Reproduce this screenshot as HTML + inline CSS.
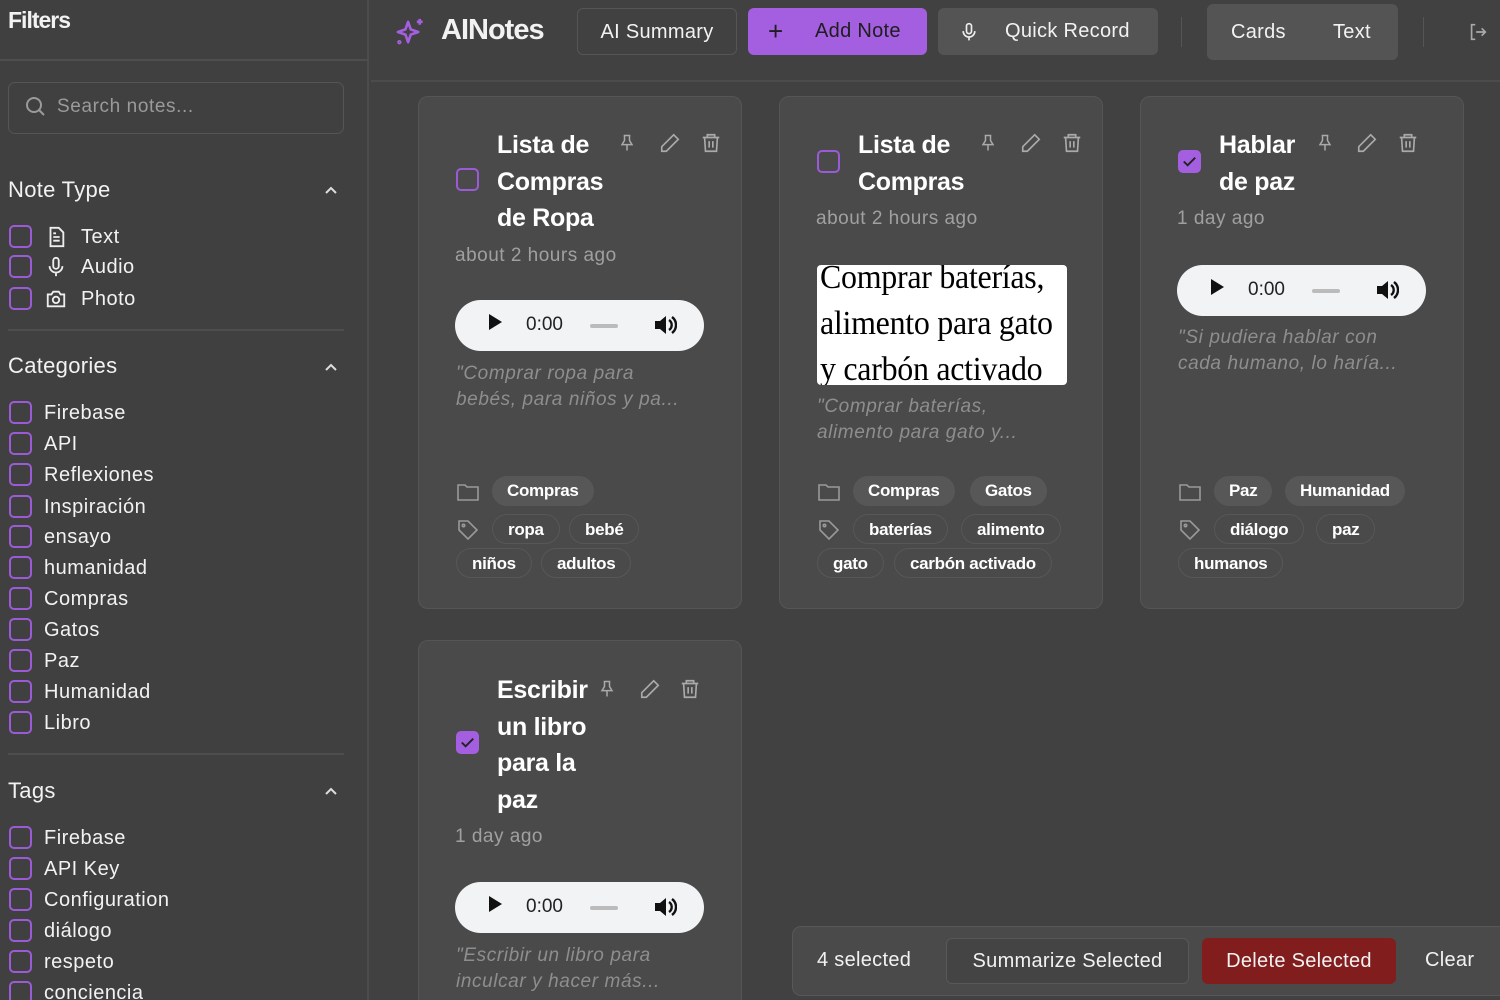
<!DOCTYPE html>
<html><head><meta charset="utf-8"><style>
*{box-sizing:border-box;margin:0;padding:0}
html,body{width:1500px;height:1000px;overflow:hidden}
body{background:#414141;font-family:"Liberation Sans","DejaVu Sans",sans-serif;color:#f2f2f2;position:relative}
.abs{position:absolute}
#side{left:0;top:0;width:369px;height:1000px;background:#404040;border-right:2px solid #4c4c4c}
.cb{position:absolute;width:23px;height:23px;border:2px solid #9b5bd6;border-radius:5px}
.cb.on{background:#a45ee0;border-color:#a45ee0}
.item{position:absolute;left:0;font-size:20px;height:24px;line-height:24px;letter-spacing:0.5px}
.item .cb{left:9px;top:0}
.item span{position:absolute;white-space:nowrap}
.hd{position:absolute;left:8px;font-size:22px;letter-spacing:0.3px}
.chev{position:absolute;left:323px;width:16px;height:10px}
.hr{position:absolute;left:8px;width:336px;height:2px;background:#4e4e4e}
.card{position:absolute;width:324px;background:#4a4a4a;border:1px solid #555;border-radius:10px}
.title{position:absolute;left:78px;font-weight:bold;font-size:25px;line-height:36.5px;letter-spacing:-0.3px;color:#fff}
.date{position:absolute;left:36px;font-size:19px;color:#a0a0a0;letter-spacing:0.5px}
.audio{position:absolute;left:36px;width:249px;height:51px;background:#f1f3f4;border-radius:26px;color:#222;font-size:19px}
.desc{position:absolute;left:37px;font-size:19px;font-style:italic;color:#8e8e8e;line-height:26px;width:228px;letter-spacing:0.6px}
.pill{position:absolute;height:30px;line-height:29px;border-radius:15px;font-size:17px;font-weight:bold;padding:0 15px;color:#fff;letter-spacing:-0.3px}
.cat{background:#575757}
.tag{border:1px solid #575757}
.ic{position:absolute}
.btn{position:absolute;top:8px;height:47px;border-radius:6px;font-size:20px;line-height:47px;letter-spacing:0.3px}
</style></head><body>
<div id="side" class="abs">
 <div class="abs" style="left:8px;top:7px;font-size:23px;font-weight:bold;letter-spacing:-1px">Filters</div>
 <div class="abs" style="left:0;top:59px;width:369px;height:2px;background:#4e4e4e"></div>
 <div class="abs" style="left:8px;top:82px;width:336px;height:52px;border:1px solid #555;border-radius:7px"></div>
 <svg class="ic" style="left:24px;top:95px" width="24" height="24" viewBox="0 0 24 24" fill="none" stroke="#9a9a9a" stroke-width="2"><circle cx="10" cy="10" r="7"/><path d="M15 15l5 5"/></svg>
 <div class="abs" style="left:57px;top:96px;font-size:19px;color:#9a9a9a;letter-spacing:0.6px">Search notes...</div>
 <div class="hd" style="top:177px">Note Type</div>
 <svg class="chev" style="top:185px" viewBox="0 0 16 10" fill="none" stroke="#ddd" stroke-width="2"><path d="M3 8l5-5 5 5"/></svg>
 <div class="item" style="top:225px"><div class="cb"></div><svg class="ic" style="left:45px;top:1px" width="22" height="22" viewBox="0 0 24 24" fill="none" stroke="#eee" stroke-width="2"><path d="M6 2h9l5 5v15H6z"/><path d="M9 12h7M9 16h7M9 8h3"/></svg><span style="left:81px">Text</span></div>
 <div class="item" style="top:255px"><div class="cb"></div><svg class="ic" style="left:45px;top:1px" width="22" height="22" viewBox="0 0 24 24" fill="none" stroke="#eee" stroke-width="2"><rect x="9" y="2" width="6" height="12" rx="3"/><path d="M5 11a7 7 0 0014 0M12 18v4"/></svg><span style="left:81px">Audio</span></div>
 <div class="item" style="top:287px"><div class="cb"></div><svg class="ic" style="left:45px;top:1px" width="22" height="22" viewBox="0 0 24 24" fill="none" stroke="#eee" stroke-width="2"><path d="M3 7h4l2-3h6l2 3h4v13H3z"/><circle cx="12" cy="13" r="3.5"/></svg><span style="left:81px">Photo</span></div>
 <div class="hr" style="top:329px"></div>
 <div class="hd" style="top:353px">Categories</div>
 <svg class="chev" style="top:362px" viewBox="0 0 16 10" fill="none" stroke="#ddd" stroke-width="2"><path d="M3 8l5-5 5 5"/></svg>
 <div class="item" style="top:401px"><div class="cb"></div><span style="left:44px">Firebase</span></div>
 <div class="item" style="top:432px"><div class="cb"></div><span style="left:44px">API</span></div>
 <div class="item" style="top:463px"><div class="cb"></div><span style="left:44px">Reflexiones</span></div>
 <div class="item" style="top:495px"><div class="cb"></div><span style="left:44px">Inspiración</span></div>
 <div class="item" style="top:525px"><div class="cb"></div><span style="left:44px">ensayo</span></div>
 <div class="item" style="top:556px"><div class="cb"></div><span style="left:44px">humanidad</span></div>
 <div class="item" style="top:587px"><div class="cb"></div><span style="left:44px">Compras</span></div>
 <div class="item" style="top:618px"><div class="cb"></div><span style="left:44px">Gatos</span></div>
 <div class="item" style="top:649px"><div class="cb"></div><span style="left:44px">Paz</span></div>
 <div class="item" style="top:680px"><div class="cb"></div><span style="left:44px">Humanidad</span></div>
 <div class="item" style="top:711px"><div class="cb"></div><span style="left:44px">Libro</span></div>
 <div class="hr" style="top:753px"></div>
 <div class="hd" style="top:778px">Tags</div>
 <svg class="chev" style="top:786px" viewBox="0 0 16 10" fill="none" stroke="#ddd" stroke-width="2"><path d="M3 8l5-5 5 5"/></svg>
 <div class="item" style="top:826px"><div class="cb"></div><span style="left:44px">Firebase</span></div>
 <div class="item" style="top:857px"><div class="cb"></div><span style="left:44px">API Key</span></div>
 <div class="item" style="top:888px"><div class="cb"></div><span style="left:44px">Configuration</span></div>
 <div class="item" style="top:919px"><div class="cb"></div><span style="left:44px">diálogo</span></div>
 <div class="item" style="top:950px"><div class="cb"></div><span style="left:44px">respeto</span></div>
 <div class="item" style="top:981px"><div class="cb"></div><span style="left:44px">conciencia</span></div>
</div>

<div class="abs" style="left:371px;top:80px;width:1129px;height:2px;background:#4c4c4c"></div>
<svg class="ic" style="left:393px;top:16px" width="36" height="32" viewBox="0 0 24 22" fill="none" stroke="#a45ee0" stroke-width="1.8" stroke-linejoin="round"><path d="M10 4l1.8 5.2L17 11l-5.2 1.8L10 18l-1.8-5.2L3 11l5.2-1.8z"/><path d="M18 2v4M16 4h4"/><circle cx="4" cy="18" r="0.6"/></svg>
<div class="abs" style="left:441px;top:14px;font-size:29px;font-weight:bold;letter-spacing:-1px">AINotes</div>
<div class="btn" style="left:577px;width:160px;border:1px solid #555;text-align:center">AI Summary</div>
<div class="btn" style="left:748px;width:179px;background:#a45ee0;color:#1e1e1e"><span style="position:absolute;left:20px;font-size:26px">+</span><span style="position:absolute;left:67px">Add Note</span></div>
<div class="btn" style="left:938px;width:220px;background:#545454"><svg class="ic" style="left:21px;top:13px" width="20" height="22" viewBox="0 0 24 24" fill="none" stroke="#eee" stroke-width="2"><rect x="9" y="2" width="6" height="12" rx="3"/><path d="M5 11a7 7 0 0014 0M12 18v4"/></svg><span style="position:absolute;left:67px">Quick Record</span></div>
<div class="abs" style="left:1181px;top:17px;width:1px;height:30px;background:#555"></div>
<div class="abs" style="left:1207px;top:4px;width:191px;height:56px;background:#545454;border-radius:6px;font-size:20px;line-height:56px;letter-spacing:0.3px"><span style="position:absolute;left:24px">Cards</span><span style="position:absolute;left:126px">Text</span></div>
<div class="abs" style="left:1423px;top:17px;width:1px;height:30px;background:#555"></div>
<svg class="ic" style="left:1467px;top:21px" width="22" height="22" viewBox="0 0 24 24" fill="none" stroke="#aaa" stroke-width="1.8"><path d="M9 4H5v16h4M10 12h10M16 8l4 4-4 4"/></svg>

<div class="card" style="left:418px;top:96px;height:513px">
 <div class="cb" style="left:37px;top:71px"></div>
 <div class="title" style="top:30px">Lista de<br>Compras<br>de Ropa</div>
 <svg class="ic" style="left:198px;top:35px" width="20" height="22" viewBox="0 0 24 24" fill="none" stroke="#aaa" stroke-width="1.8"><path d="M8 3h8M9 3v6l-3 5h12l-3-5V3M12 14v7"/></svg>
 <svg class="ic" style="left:240px;top:35px" width="22" height="22" viewBox="0 0 24 24" fill="none" stroke="#aaa" stroke-width="1.8"><path d="M16 3l5 5L8 21H3v-5z"/></svg>
 <svg class="ic" style="left:281px;top:35px" width="22" height="22" viewBox="0 0 24 24" fill="none" stroke="#aaa" stroke-width="1.8"><path d="M3 6h18M8 6V3h8v3M5 6l1 15h12l1-15M10 10v7M14 10v7"/></svg>
 <div class="date" style="top:148px">about 2 hours ago</div>
 <div class="audio" style="top:203px"><span style="position:absolute;left:34px;top:14px;border-left:13px solid #111;border-top:8px solid transparent;border-bottom:8px solid transparent"></span><span style="position:absolute;left:71px;top:14px">0:00</span><span style="position:absolute;left:135px;top:24px;width:28px;height:4px;background:#bbb;border-radius:2px"></span><svg class="ic" style="left:198px;top:14px" width="24" height="22" viewBox="0 0 24 22"><path d="M2 7h5l6-5v18l-6-5H2z" fill="#111"/><path d="M16 6a6 6 0 010 10M19 3a10 10 0 010 16" stroke="#111" stroke-width="2.4" fill="none"/></svg></div>
 <div class="desc" style="top:264px">"Comprar ropa para bebés, para niños y pa...</div>
 <svg class="ic" style="left:37px;top:385px" width="24" height="20" viewBox="0 0 24 20" fill="none" stroke="#999" stroke-width="1.6"><path d="M2 3h7l2 2h11v13H2z"/></svg>
 <div class="pill cat" style="left:73px;top:379px">Compras</div>
 <svg class="ic" style="left:37px;top:421px" width="24" height="24" viewBox="0 0 24 24" fill="none" stroke="#999" stroke-width="1.6"><path d="M3 3h9l9 9-9 9-9-9z"/><circle cx="7.5" cy="7.5" r="1.2"/></svg>
 <div class="pill tag" style="left:73px;top:417px">ropa</div>
 <div class="pill tag" style="left:150px;top:417px">bebé</div>
 <div class="pill tag" style="left:37px;top:451px">niños</div>
 <div class="pill tag" style="left:122px;top:451px">adultos</div>
</div>

<div class="card" style="left:779px;top:96px;height:513px">
 <div class="cb" style="left:37px;top:53px"></div>
 <div class="title" style="top:30px">Lista de<br>Compras</div>
 <svg class="ic" style="left:198px;top:35px" width="20" height="22" viewBox="0 0 24 24" fill="none" stroke="#aaa" stroke-width="1.8"><path d="M8 3h8M9 3v6l-3 5h12l-3-5V3M12 14v7"/></svg>
 <svg class="ic" style="left:240px;top:35px" width="22" height="22" viewBox="0 0 24 24" fill="none" stroke="#aaa" stroke-width="1.8"><path d="M16 3l5 5L8 21H3v-5z"/></svg>
 <svg class="ic" style="left:281px;top:35px" width="22" height="22" viewBox="0 0 24 24" fill="none" stroke="#aaa" stroke-width="1.8"><path d="M3 6h18M8 6V3h8v3M5 6l1 15h12l1-15M10 10v7M14 10v7"/></svg>
 <div class="date" style="top:111px">about 2 hours ago</div>
 <div class="abs" style="left:37px;top:168px;width:250px;height:120px;background:#fff;border-radius:4px;overflow:hidden;color:#000;font-family:'Liberation Serif',serif;font-size:34px;line-height:46px;padding-left:3px;white-space:nowrap;letter-spacing:-0.3px"><div style="margin-top:-10px;transform:scaleX(0.94);transform-origin:left">Comprar baterías,<br>alimento para gato<br>y carbón activado</div></div>
 <div class="desc" style="top:297px">"Comprar baterías, alimento para gato y...</div>
 <svg class="ic" style="left:37px;top:385px" width="24" height="20" viewBox="0 0 24 20" fill="none" stroke="#999" stroke-width="1.6"><path d="M2 3h7l2 2h11v13H2z"/></svg>
 <div class="pill cat" style="left:73px;top:379px">Compras</div>
 <div class="pill cat" style="left:190px;top:379px">Gatos</div>
 <svg class="ic" style="left:37px;top:421px" width="24" height="24" viewBox="0 0 24 24" fill="none" stroke="#999" stroke-width="1.6"><path d="M3 3h9l9 9-9 9-9-9z"/><circle cx="7.5" cy="7.5" r="1.2"/></svg>
 <div class="pill tag" style="left:73px;top:417px">baterías</div>
 <div class="pill tag" style="left:181px;top:417px">alimento</div>
 <div class="pill tag" style="left:37px;top:451px">gato</div>
 <div class="pill tag" style="left:114px;top:451px">carbón activado</div>
</div>

<div class="card" style="left:1140px;top:96px;height:513px">
 <div class="cb on" style="left:37px;top:53px"><svg width="19" height="19" viewBox="0 0 20 20" fill="none" stroke="#222" stroke-width="2"><path d="M4 10l4 4 8-8"/></svg></div>
 <div class="title" style="top:30px">Hablar<br>de paz</div>
 <svg class="ic" style="left:174px;top:35px" width="20" height="22" viewBox="0 0 24 24" fill="none" stroke="#aaa" stroke-width="1.8"><path d="M8 3h8M9 3v6l-3 5h12l-3-5V3M12 14v7"/></svg>
 <svg class="ic" style="left:215px;top:35px" width="22" height="22" viewBox="0 0 24 24" fill="none" stroke="#aaa" stroke-width="1.8"><path d="M16 3l5 5L8 21H3v-5z"/></svg>
 <svg class="ic" style="left:256px;top:35px" width="22" height="22" viewBox="0 0 24 24" fill="none" stroke="#aaa" stroke-width="1.8"><path d="M3 6h18M8 6V3h8v3M5 6l1 15h12l1-15M10 10v7M14 10v7"/></svg>
 <div class="date" style="top:111px">1 day ago</div>
 <div class="audio" style="top:168px"><span style="position:absolute;left:34px;top:14px;border-left:13px solid #111;border-top:8px solid transparent;border-bottom:8px solid transparent"></span><span style="position:absolute;left:71px;top:14px">0:00</span><span style="position:absolute;left:135px;top:24px;width:28px;height:4px;background:#bbb;border-radius:2px"></span><svg class="ic" style="left:198px;top:14px" width="24" height="22" viewBox="0 0 24 22"><path d="M2 7h5l6-5v18l-6-5H2z" fill="#111"/><path d="M16 6a6 6 0 010 10M19 3a10 10 0 010 16" stroke="#111" stroke-width="2.4" fill="none"/></svg></div>
 <div class="desc" style="top:228px">"Si pudiera hablar con cada humano, lo haría...</div>
 <svg class="ic" style="left:37px;top:385px" width="24" height="20" viewBox="0 0 24 20" fill="none" stroke="#999" stroke-width="1.6"><path d="M2 3h7l2 2h11v13H2z"/></svg>
 <div class="pill cat" style="left:73px;top:379px">Paz</div>
 <div class="pill cat" style="left:144px;top:379px">Humanidad</div>
 <svg class="ic" style="left:37px;top:421px" width="24" height="24" viewBox="0 0 24 24" fill="none" stroke="#999" stroke-width="1.6"><path d="M3 3h9l9 9-9 9-9-9z"/><circle cx="7.5" cy="7.5" r="1.2"/></svg>
 <div class="pill tag" style="left:73px;top:417px">diálogo</div>
 <div class="pill tag" style="left:175px;top:417px">paz</div>
 <div class="pill tag" style="left:37px;top:451px">humanos</div>
</div>

<div class="card" style="left:418px;top:640px;height:400px">
 <div class="cb on" style="left:37px;top:90px"><svg width="19" height="19" viewBox="0 0 20 20" fill="none" stroke="#222" stroke-width="2"><path d="M4 10l4 4 8-8"/></svg></div>
 <div class="title" style="top:31px">Escribir<br>un libro<br>para la<br>paz</div>
 <svg class="ic" style="left:178px;top:37px" width="20" height="22" viewBox="0 0 24 24" fill="none" stroke="#aaa" stroke-width="1.8"><path d="M8 3h8M9 3v6l-3 5h12l-3-5V3M12 14v7"/></svg>
 <svg class="ic" style="left:220px;top:37px" width="22" height="22" viewBox="0 0 24 24" fill="none" stroke="#aaa" stroke-width="1.8"><path d="M16 3l5 5L8 21H3v-5z"/></svg>
 <svg class="ic" style="left:260px;top:37px" width="22" height="22" viewBox="0 0 24 24" fill="none" stroke="#aaa" stroke-width="1.8"><path d="M3 6h18M8 6V3h8v3M5 6l1 15h12l1-15M10 10v7M14 10v7"/></svg>
 <div class="date" style="top:185px">1 day ago</div>
 <div class="audio" style="top:241px"><span style="position:absolute;left:34px;top:14px;border-left:13px solid #111;border-top:8px solid transparent;border-bottom:8px solid transparent"></span><span style="position:absolute;left:71px;top:14px">0:00</span><span style="position:absolute;left:135px;top:24px;width:28px;height:4px;background:#bbb;border-radius:2px"></span><svg class="ic" style="left:198px;top:14px" width="24" height="22" viewBox="0 0 24 22"><path d="M2 7h5l6-5v18l-6-5H2z" fill="#111"/><path d="M16 6a6 6 0 010 10M19 3a10 10 0 010 16" stroke="#111" stroke-width="2.4" fill="none"/></svg></div>
 <div class="desc" style="top:302px">"Escribir un libro para inculcar y hacer más...</div>
</div>

<div class="abs" style="left:792px;top:926px;width:720px;height:70px;background:#4a4a4a;border:1px solid #575757;border-radius:9px;font-size:20px;letter-spacing:0.3px">
 <span class="abs" style="left:24px;top:22px">4 selected</span>
 <div class="abs" style="left:153px;top:11px;width:243px;height:46px;border:1px solid #585858;background:#444;border-radius:6px;line-height:44px;text-align:center">Summarize Selected</div>
 <div class="abs" style="left:409px;top:11px;width:194px;height:46px;background:#821d1d;border-radius:6px;line-height:46px;text-align:center">Delete Selected</div>
 <span class="abs" style="left:632px;top:22px">Clear</span>
</div>
</body></html>
